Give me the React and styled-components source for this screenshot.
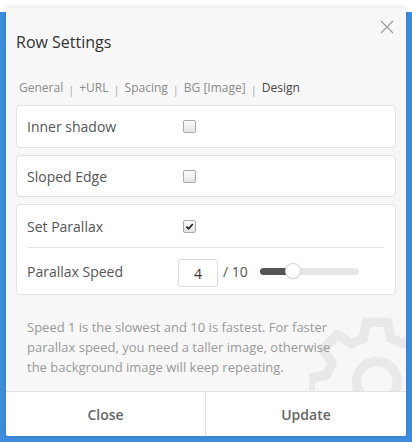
import React, { useState } from 'react';
import styled, { createGlobalStyle } from 'styled-components';

const GlobalStyle = createGlobalStyle`
  html, body {
    margin: 0;
    padding: 0;
  }
  body {
    font-family: "Open Sans", "Noto Sans", Arial, sans-serif;
    background: #ffffff;
  }
`;

const Page = styled.div`
  width: 412px;
  height: 442px;
  box-sizing: border-box;
  padding: 8px 6px 0;
  background: linear-gradient(#ffffff 0, #ffffff 12px, #3d8ee0 12px);
  overflow: hidden;
`;

const Modal = styled.div`
  position: relative;
  height: 428px;
  background: #f7f7f7;
  border-radius: 3px;
  box-shadow: 0 0 6px rgba(0, 0, 0, 0.15);
  display: flex;
  flex-direction: column;
  overflow: hidden;
`;

const Header = styled.div`
  display: flex;
  justify-content: space-between;
  align-items: flex-start;
  padding: 23px 10px 0 10px;
`;

const Title = styled.h2`
  margin: 0;
  font-size: 16px;
  line-height: 22px;
  font-weight: 400;
  color: #333;
`;

const CloseX = styled.button`
  border: 0;
  background: none;
  padding: 0;
  margin-top: -12px;
  width: 16px;
  height: 16px;
  cursor: pointer;
  & svg {
    display: block;
  }
`;

const Tabs = styled.div`
  display: flex;
  align-items: center;
  height: 18px;
  margin: 26px 0 0 13px;
  font-size: 12px;
  line-height: 18px;
`;

const Tab = styled.span`
  color: ${p => (p.$active ? '#444' : '#8a8a8a')};
`;

const Sep = styled.span`
  color: #aaa;
  margin: 3px 5px 0;
  font-size: 11px;
  line-height: 15px;
`;

const Body = styled.div`
  position: relative;
  z-index: 1;
  display: flex;
  flex-direction: column;
  gap: 7px;
  padding: 8px 10px 0;
`;

const Card = styled.div`
  background: #fff;
  border: 1px solid #e3e3e3;
  border-radius: 4px;
  padding: 0 11px 0 10px;
`;

const Row = styled.div`
  display: grid;
  grid-template-columns: 151px 1fr;
  align-items: center;
  height: ${p => p.$h || 40}px;
  border-top: ${p => (p.$divided ? '1px solid #e6e6e6' : '0')};
`;

const Label = styled.span`
  font-size: 14px;
  color: #555;
`;

const Check = styled.span`
  display: inline-flex;
  align-items: center;
  justify-content: center;
  margin-left: 5px;
  width: 11px;
  height: 11px;
  border: 1px solid #a9a9a9;
  border-radius: 2px;
  background: linear-gradient(#fdfdfd, #e4e4e4);
`;

const Controls = styled.div`
  display: flex;
  align-items: center;
`;

const NumBox = styled.div`
  box-sizing: border-box;
  width: 40px;
  height: 28px;
  border: 1px solid #dcdcdc;
  border-radius: 3px;
  background: #fff;
  display: flex;
  align-items: center;
  justify-content: center;
  font-size: 14px;
  color: #333;
  margin-top: 4px;
`;

const Max = styled.span`
  font-size: 14px;
  color: #555;
  margin: 0 12px 0 5px;
`;

const Track = styled.div`
  position: relative;
  width: 99px;
  height: 7px;
  border-radius: 4px;
  background: #e6e6e6;
`;

const Fill = styled.div`
  height: 100%;
  border-radius: 4px 0 0 4px;
  background: #555;
`;

const Thumb = styled.div`
  position: absolute;
  top: 50%;
  width: 14px;
  height: 14px;
  margin: -7px 0 0 -7px;
  border-radius: 50%;
  background: #fff;
  box-shadow: 0 0 0 1px #d6d6d6, 0 1px 2px rgba(0, 0, 0, 0.2);
`;

const Note = styled.p`
  position: relative;
  z-index: 1;
  width: 310px;
  margin: 22px 0 0;
  padding: 0 0 0 21px;
  font-size: 13px;
  line-height: 20px;
  color: #999;
`;

const Gear = styled.svg`
  position: absolute;
  right: -39px;
  bottom: -14px;
  z-index: 0;
`;

const Footer = styled.div`
  position: relative;
  z-index: 1;
  margin-top: auto;
  display: grid;
  grid-template-columns: 199px 1fr;
  height: 44px;
  background: #fff;
  border-top: 1px solid #e2e2e2;
`;

const FootButton = styled.button`
  border: 0;
  border-left: ${p => (p.$divided ? '1px solid #e2e2e2' : '0')};
  background: #fff;
  font-family: inherit;
  font-size: 14px;
  font-weight: 600;
  color: #666;
  cursor: pointer;
`;

const CheckMark = () => (
  <svg width="9" height="9" viewBox="0 0 10 10">
    <path d="M1.5 5.2 L4 7.6 L8.6 2.2" fill="none" stroke="#222" strokeWidth="1.9" />
  </svg>
);

const tabs = ['General', '+URL', 'Spacing', 'BG [Image]', 'Design'];

export default function App() {
  const [speed] = useState(4);
  const pct = ((speed - 1) / 9) * 100;
  return (
    <>
      <GlobalStyle />
      <Page>
        <Modal>
          <Gear width="136" height="136" viewBox="0 0 100 100">
            <path
              d="M42 6 h16 l2 12 a34 34 0 0 1 9 4 l10 -7 l11 11 l-7 10 a34 34 0 0 1 4 9 l12 2 v16 l-12 2 a34 34 0 0 1 -4 9 l7 10 l-11 11 l-10 -7 a34 34 0 0 1 -9 4 l-2 12 h-16 l-2 -12 a34 34 0 0 1 -9 -4 l-10 7 l-11 -11 l7 -10 a34 34 0 0 1 -4 -9 l-12 -2 v-16 l12 -2 a34 34 0 0 1 4 -9 l-7 -10 l11 -11 l10 7 a34 34 0 0 1 9 -4 z"
              fill="none"
              stroke="#e9e9e9"
              strokeWidth="7"
              strokeLinejoin="round"
            />
            <circle cx="50" cy="50" r="15" fill="none" stroke="#e9e9e9" strokeWidth="7" />
          </Gear>
          <Header>
            <Title>Row Settings</Title>
            <CloseX title="Close">
              <svg width="14" height="14" viewBox="0 0 14 14">
                <path d="M1 1 L13 13 M13 1 L1 13" stroke="#999" strokeWidth="1.1" />
              </svg>
            </CloseX>
          </Header>
          <Tabs>
            {tabs.map((t, i) => (
              <React.Fragment key={t}>
                {i > 0 && <Sep>|</Sep>}
                <Tab $active={t === 'Design'}>{t}</Tab>
              </React.Fragment>
            ))}
          </Tabs>
          <Body>
            <Card>
              <Row $h={41}>
                <Label>Inner shadow</Label>
                <Check />
              </Row>
            </Card>
            <Card>
              <Row $h={40}>
                <Label>Sloped Edge</Label>
                <Check />
              </Row>
            </Card>
            <Card>
              <Row $h={42}>
                <Label>Set Parallax</Label>
                <Check>
                  <CheckMark />
                </Check>
              </Row>
              <Row $h={46} $divided>
                <Label>Parallax Speed</Label>
                <Controls>
                  <NumBox>{speed}</NumBox>
                  <Max>/ 10</Max>
                  <Track>
                    <Fill style={{ width: `${pct}%` }} />
                    <Thumb style={{ left: `${pct}%` }} />
                  </Track>
                </Controls>
              </Row>
            </Card>
          </Body>
          <Note>
            Speed 1 is the slowest and 10 is fastest. For faster parallax speed, you need a taller
            image, otherwise the background image will keep repeating.
          </Note>
          <Footer>
            <FootButton>Close</FootButton>
            <FootButton $divided>Update</FootButton>
          </Footer>
        </Modal>
      </Page>
    </>
  );
}
